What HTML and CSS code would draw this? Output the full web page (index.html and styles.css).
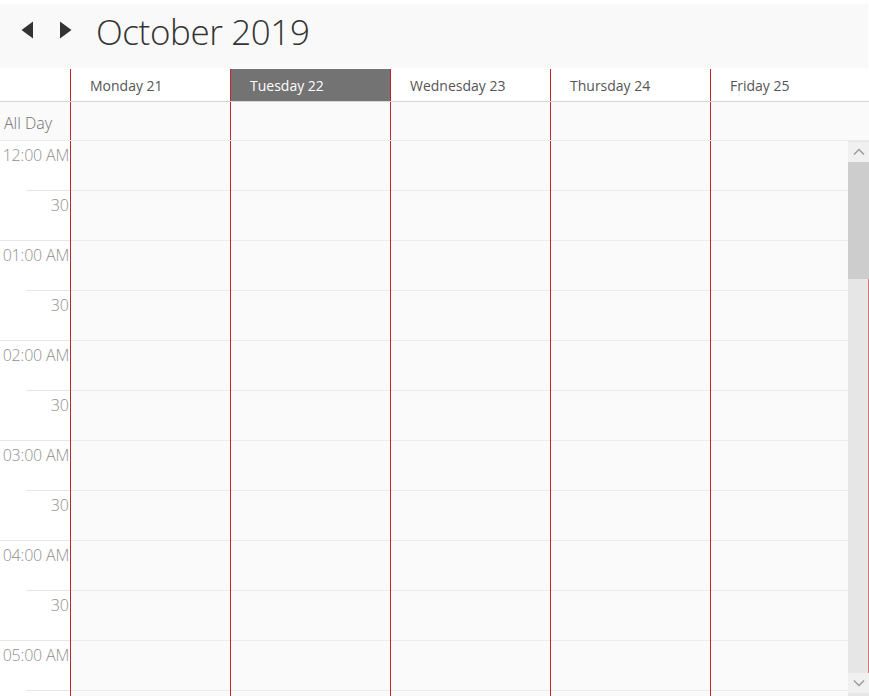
FILE: index.html
```html
<!DOCTYPE html>
<html>
<head>
<meta charset="utf-8">
<link rel="stylesheet" href="styles.css">
</head>
<body>
<div class="scheduler">
  <div class="toolbar">
    <button class="nav" aria-label="Previous">
      <svg width="13" height="18" viewBox="0 0 13 18"><polygon points="12,0.5 12,17.5 0.5,9" fill="#333"/></svg>
    </button>
    <button class="nav" aria-label="Next">
      <svg width="13" height="18" viewBox="0 0 13 18"><polygon points="1,0.5 1,17.5 12.5,9" fill="#333"/></svg>
    </button>
    <h1 class="title">October 2019</h1>
  </div>

  <div class="day-header">
    <div class="corner"></div>
    <div class="day">Monday 21</div>
    <div class="day today">Tuesday 22</div>
    <div class="day">Wednesday 23</div>
    <div class="day">Thursday 24</div>
    <div class="day">Friday 25</div>
  </div>

  <div class="allday-row">
    <div class="allday-label">All Day</div>
    <div class="allday-cell"></div>
    <div class="allday-cell"></div>
    <div class="allday-cell"></div>
    <div class="allday-cell"></div>
    <div class="allday-cell"></div>
  </div>

  <div class="body">
    <div class="scroll-content">
      <div class="times">
        <div class="slot-label hour">12:00 AM</div>
        <div class="slot-label half">30</div>
        <div class="slot-label hour">01:00 AM</div>
        <div class="slot-label half">30</div>
        <div class="slot-label hour">02:00 AM</div>
        <div class="slot-label half">30</div>
        <div class="slot-label hour">03:00 AM</div>
        <div class="slot-label half">30</div>
        <div class="slot-label hour">04:00 AM</div>
        <div class="slot-label half">30</div>
        <div class="slot-label hour">05:00 AM</div>
      </div>
      <div class="col"><div class="cell"></div><div class="cell"></div><div class="cell"></div><div class="cell"></div><div class="cell"></div><div class="cell"></div><div class="cell"></div><div class="cell"></div><div class="cell"></div><div class="cell"></div><div class="cell"></div><div class="cell"></div></div>
      <div class="col"><div class="cell"></div><div class="cell"></div><div class="cell"></div><div class="cell"></div><div class="cell"></div><div class="cell"></div><div class="cell"></div><div class="cell"></div><div class="cell"></div><div class="cell"></div><div class="cell"></div><div class="cell"></div></div>
      <div class="col"><div class="cell"></div><div class="cell"></div><div class="cell"></div><div class="cell"></div><div class="cell"></div><div class="cell"></div><div class="cell"></div><div class="cell"></div><div class="cell"></div><div class="cell"></div><div class="cell"></div><div class="cell"></div></div>
      <div class="col"><div class="cell"></div><div class="cell"></div><div class="cell"></div><div class="cell"></div><div class="cell"></div><div class="cell"></div><div class="cell"></div><div class="cell"></div><div class="cell"></div><div class="cell"></div><div class="cell"></div><div class="cell"></div></div>
      <div class="col"><div class="cell"></div><div class="cell"></div><div class="cell"></div><div class="cell"></div><div class="cell"></div><div class="cell"></div><div class="cell"></div><div class="cell"></div><div class="cell"></div><div class="cell"></div><div class="cell"></div><div class="cell"></div></div>
    </div>
    <div class="scrollbar">
      <div class="sb-btn">
        <svg width="12" height="8" viewBox="0 0 12 8"><polyline points="1,6.5 6,1.5 11,6.5" fill="none" stroke="#999" stroke-width="1.4"/></svg>
      </div>
      <div class="sb-track">
        <div class="sb-thumb"></div>
      </div>
      <div class="sb-btn">
        <svg width="12" height="8" viewBox="0 0 12 8"><polyline points="1,1.5 6,6.5 11,1.5" fill="none" stroke="#999" stroke-width="1.4"/></svg>
      </div>
    </div>
  </div>
</div>
</body>
</html>
```

FILE: styles.css
```css
html, body {
  margin: 0;
  padding: 0;
  background: #ffffff;
  overflow: hidden;
}

.scheduler {
  width: 869px;
  height: 696px;
  display: flex;
  flex-direction: column;
  overflow: hidden;
  font-family: "Open Sans", "Liberation Sans", sans-serif;
}

.toolbar {
  margin-top: 4px;
  height: 64px;
  margin-right: 1px;
  background: #f9f9f9;
  display: flex;
  align-items: flex-start;
  padding-left: 21px;
  box-sizing: border-box;
  flex-shrink: 0;
}

.nav {
  border: 0;
  background: transparent;
  padding: 0;
  margin: 17px 25px 0 0;
  width: 13px;
  height: 18px;
  display: flex;
  align-items: center;
  justify-content: center;
}

.title {
  margin: 4px 0 0 -1px;
  font-size: 35px;
  line-height: 48px;
  font-weight: 300;
  color: #333333;
  letter-spacing: -0.4px;
}

.day-header {
  margin-top: 1px;
  height: 32px;
  display: flex;
  border-bottom: 1px solid #d6d6d6;
  background: #ffffff;
  flex-shrink: 0;
}

.corner {
  width: 70px;
  flex-shrink: 0;
}

.day {
  width: 160px;
  flex-shrink: 0;
  border-left: 1px solid #bf262c;
  padding-left: 19px;
  box-sizing: border-box;
  font-size: 14px;
  color: #555555;
  line-height: 33px;
  white-space: nowrap;
}

.day.today {
  background: #737373;
  color: #ffffff;
}

.allday-row {
  height: 38px;
  display: flex;
  border-bottom: 1px solid #ebebeb;
  background: #fafafa;
  flex-shrink: 0;
}

.allday-label {
  width: 70px;
  flex-shrink: 0;
  padding-left: 4px;
  box-sizing: border-box;
  font-size: 16px;
  font-weight: 300;
  color: #6f6f6f;
  line-height: 42px;
  white-space: nowrap;
}

.allday-cell {
  width: 160px;
  box-sizing: border-box;
  flex-shrink: 0;
  border-left: 1px solid #bf262c;
}

.body {
  flex: 1;
  display: flex;
  min-height: 0;
}

.scroll-content {
  flex: 1;
  display: flex;
  overflow: hidden;
}

.times {
  width: 70px;
  flex-shrink: 0;
  background: #ffffff;
}

.slot-label {
  height: 50px;
  box-sizing: border-box;
  text-align: right;
  padding-right: 1px;
  font-size: 16px;
  font-weight: 300;
  color: #8f8f8f;
  line-height: 20px;
  padding-top: 4px;
  white-space: nowrap;
  position: relative;
}

.slot-label.hour {
  letter-spacing: -0.2px;
}

.slot-label.half::after,
.slot-label.hour::after {
  content: "";
  position: absolute;
  bottom: 0;
  right: 0;
  height: 1px;
  background: #e6e6e6;
}

.slot-label.hour::after {
  left: 26px;
}

.slot-label.half::after {
  left: 0;
}

.col {
  width: 160px;
  box-sizing: border-box;
  flex-shrink: 0;
  border-left: 1px solid #bf262c;
  background: #fafafa;
}

.cell {
  height: 50px;
  box-sizing: border-box;
  border-bottom: 1px solid #ececec;
}

.scrollbar {
  width: 21px;
  flex-shrink: 0;
  display: flex;
  flex-direction: column;
  background: #e6e6e6;
  padding-top: 1px;
  padding-bottom: 3px;
  box-sizing: border-box;
}

.sb-btn {
  height: 20px;
  background: #f0f0f0;
  display: flex;
  align-items: center;
  justify-content: center;
  flex-shrink: 0;
}

.sb-track {
  flex: 1;
  border-right: 1px solid #c87b7e;
}

.sb-thumb {
  height: 117px;
  background: #cdcdcd;
  margin-right: -1px;
}
```
